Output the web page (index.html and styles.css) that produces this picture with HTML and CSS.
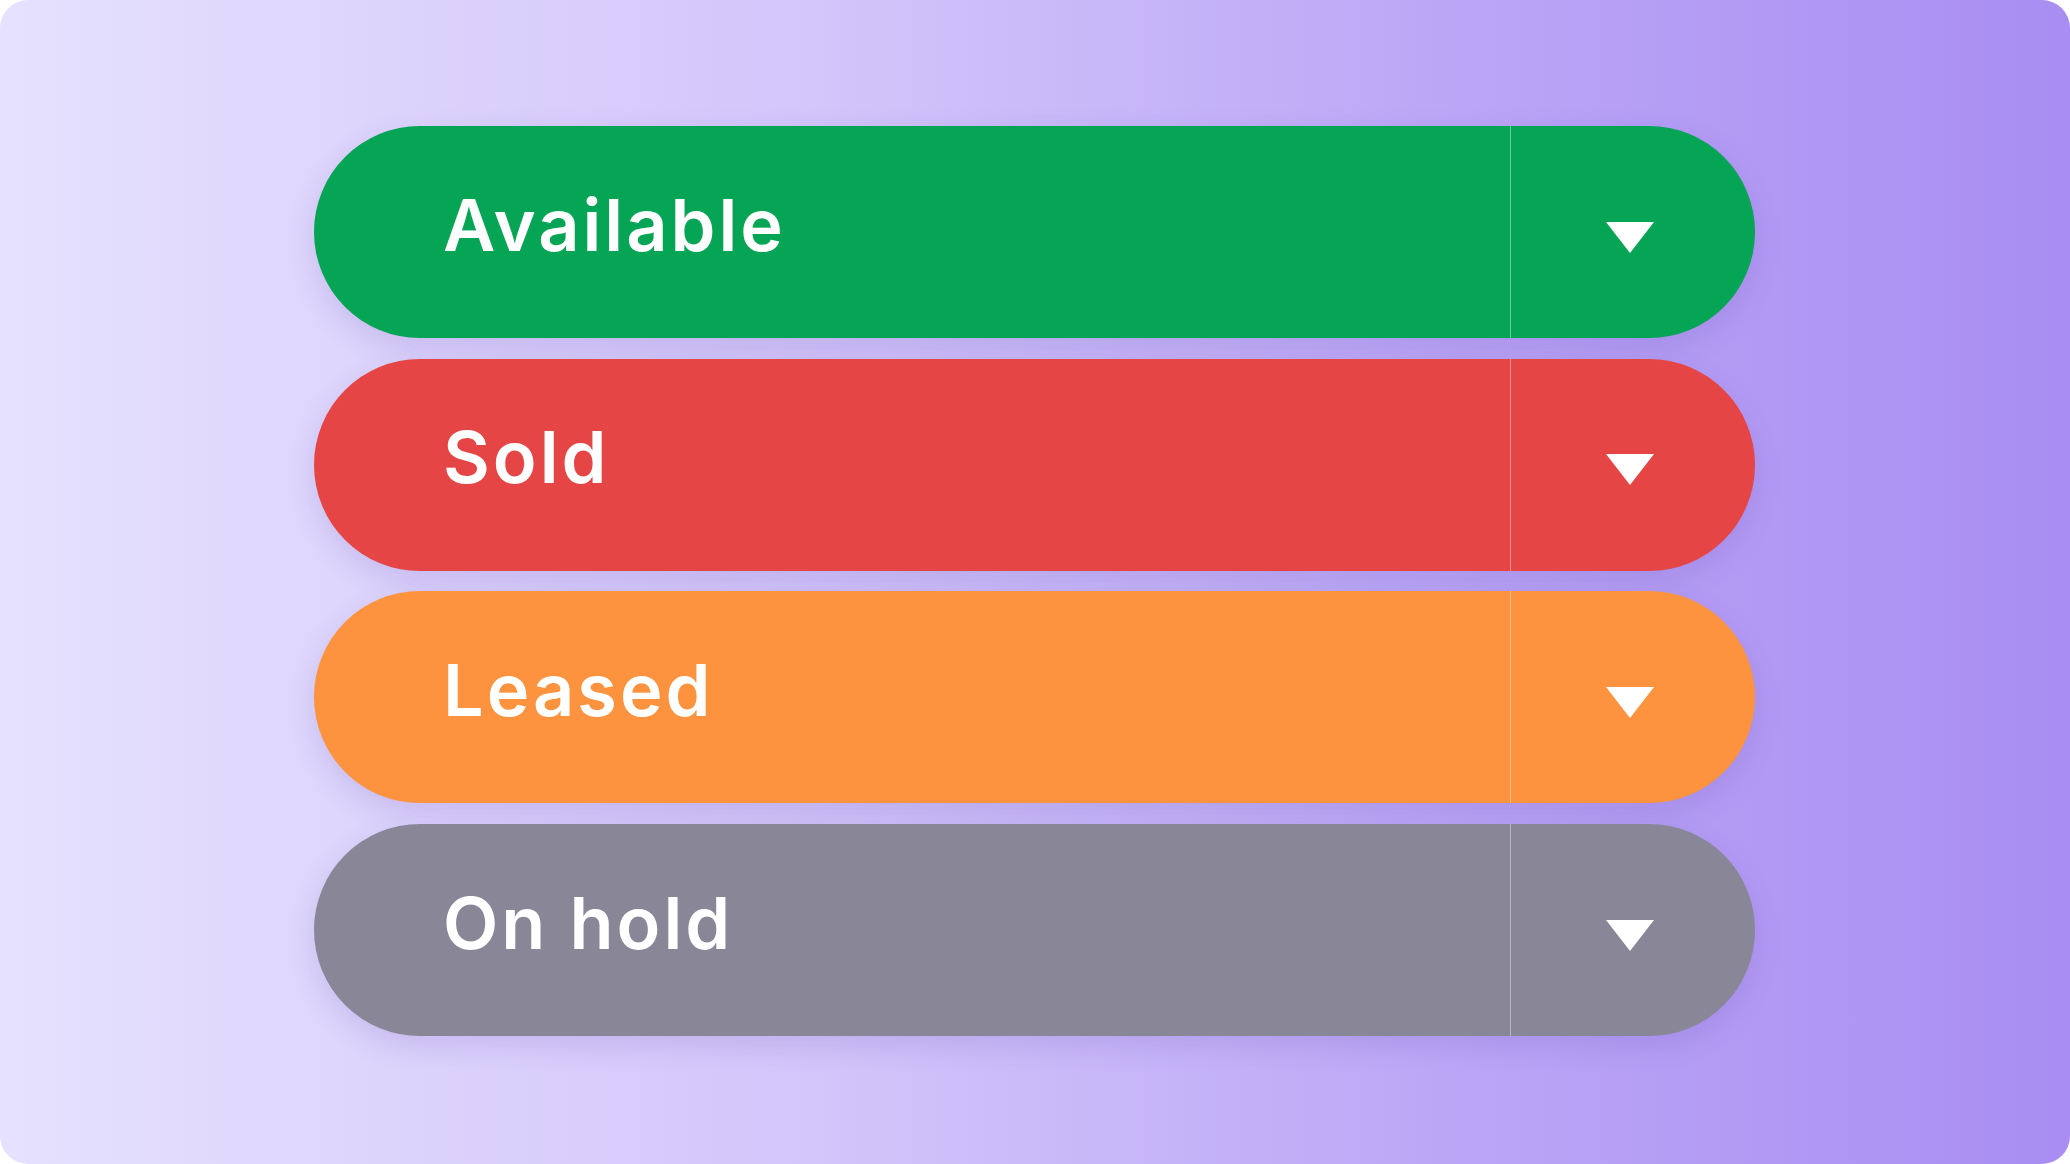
FILE: index.html
```html
<!DOCTYPE html>
<html lang="en">
<head>
<meta charset="utf-8">
<title>Status dropdowns</title>
<link rel="stylesheet" href="styles.css">
</head>
<body>
<div class="card">
  <div class="list">
    <div class="pill pill-green">
      <div class="label">Available</div>
      <div class="toggle"><svg class="caret" viewBox="0 0 48 31" width="48" height="31"><polygon points="0,0 48,0 24,31" fill="#fff"/></svg></div>
    </div>
    <div class="pill pill-red">
      <div class="label">Sold</div>
      <div class="toggle"><svg class="caret" viewBox="0 0 48 31" width="48" height="31"><polygon points="0,0 48,0 24,31" fill="#fff"/></svg></div>
    </div>
    <div class="pill pill-orange">
      <div class="label">Leased</div>
      <div class="toggle"><svg class="caret" viewBox="0 0 48 31" width="48" height="31"><polygon points="0,0 48,0 24,31" fill="#fff"/></svg></div>
    </div>
    <div class="pill pill-gray">
      <div class="label">On hold</div>
      <div class="toggle"><svg class="caret" viewBox="0 0 48 31" width="48" height="31"><polygon points="0,0 48,0 24,31" fill="#fff"/></svg></div>
    </div>
  </div>
</div>
</body>
</html>
```

FILE: styles.css
```css
html, body {
  margin: 0;
  padding: 0;
  background: #ffffff;
}
.card {
  width: 2070px;
  height: 1164px;
  box-sizing: border-box;
  border-radius: 28px;
  background: linear-gradient(90deg, #e6e1fe 0%, #d2c5fa 40%, #bba6f6 70%, #a98df2 100%);
  padding-top: 126px;
  padding-left: 314px;
  overflow: hidden;
}
.list {
  width: 1441px;
  display: flex;
  flex-direction: column;
  gap: 20.7px;
}
.pill {
  height: 212px;
  border-radius: 106px;
  display: flex;
  align-items: stretch;
  box-shadow: 0 10px 28px rgba(90, 60, 170, 0.16);
  font-family: Inter, "Noto Sans", sans-serif;
  color: #fff;
}
.pill-green { background: #06a455; }
.pill-red { background: #e64545; }
.pill-orange { background: #fd933e; }
.pill-gray { background: #898797; }
.label {
  flex: 1;
  display: flex;
  align-items: center;
  padding-left: 129px;
  padding-bottom: 16px;
  font-size: 72px;
  font-weight: 600;
  letter-spacing: 3px;
  border-right: 1px solid rgba(255, 255, 255, 0.4);
}
.toggle {
  width: 244px;
  display: flex;
  align-items: center;
  justify-content: center;
  padding-right: 6px;
  padding-top: 10px;
  box-sizing: border-box;
}
.caret { display: block; }
```
